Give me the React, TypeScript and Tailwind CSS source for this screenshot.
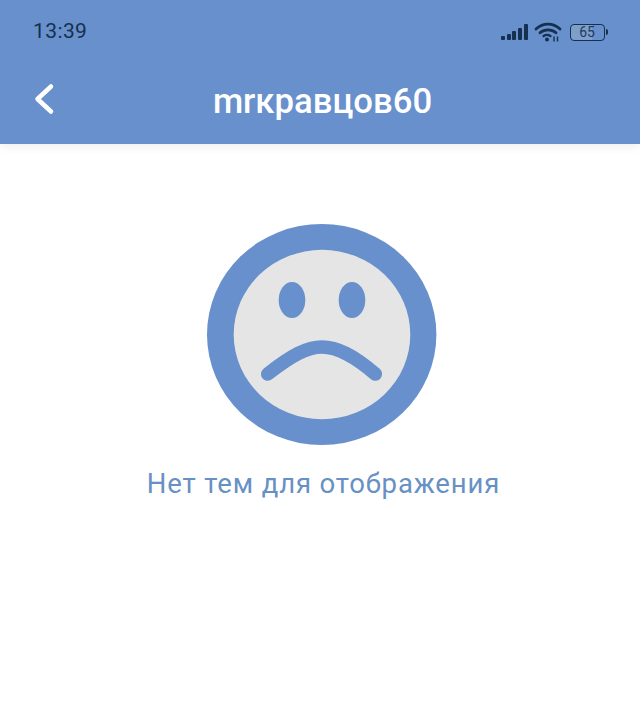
function Signal() {
  const bars = [4, 6, 9, 12, 16];
  return (
    <div className="flex items-end gap-[1.6px]">
      {bars.map((h) => (
        <div key={h} className="w-[4px] rounded-[1px] bg-[#16304f]" style={{ height: h }} />
      ))}
    </div>
  );
}

function Wifi() {
  return (
    <svg width="28" height="20" viewBox="0 0 28 20" fill="none" stroke="#16304f" strokeWidth="2.8" strokeLinecap="round">
      <path d="M2 7C9 0.5 19 0.5 26 7" />
      <path d="M6 10.8C10.5 7 17.5 7 22 10.8" />
      <path d="M9.5 14C11.5 12.6 14.5 12.6 16.5 14" strokeWidth="2.2" />
      <circle cx="13" cy="17.6" r="2" fill="#16304f" stroke="none" />
      <path d="M20 14.5v5M23.5 14.5v5" strokeWidth="1.4" strokeLinecap="butt" />
    </svg>
  );
}

function Battery() {
  return (
    <div className="flex items-center gap-[1.5px]">
      <div className="flex h-[17px] w-[35px] items-center justify-center rounded-[4px] border-[1.5px] border-[#16304f] bg-[linear-gradient(90deg,#7f9fcb_65%,transparent_65%)] text-[14px] leading-none text-[#1f3a5c]">
        65
      </div>
      <div className="h-[6px] w-[2px] rounded-r-sm bg-[#16304f]" />
    </div>
  );
}

function SadFace() {
  return (
    <svg width="230" height="222" viewBox="0 0 230 222">
      <ellipse cx="114.7" cy="110.5" rx="114.7" ry="110.5" fill="#6790cc" />
      <ellipse cx="115" cy="110.5" rx="88.3" ry="84.7" fill="#e5e5e5" />
      <ellipse cx="85" cy="76" rx="13.3" ry="18" fill="#6790cc" />
      <ellipse cx="145" cy="76" rx="13.3" ry="18" fill="#6790cc" />
      <path
        d="M60.7 150C85 131 100 123 115 123C130 123 146 131 168.3 150"
        fill="none"
        stroke="#6790cc"
        strokeWidth="13.5"
        strokeLinecap="round"
      />
    </svg>
  );
}

export default function App() {
  return (
    <div className="flex h-[721px] w-[640px] flex-col overflow-hidden bg-white font-['Roboto',sans-serif]">
      <header className="z-10 flex h-[144px] flex-col bg-[#6790cc] shadow-[0_2px_10px_rgba(0,0,0,0.08)]">
        {/* Status bar */}
        <div className="flex h-[64px] items-center justify-between pl-[33px] pr-[32px]">
          <span className="text-[21px] font-[450] tracking-[0.4px] text-[#16304f]">13:39</span>
          <div className="flex items-center gap-[6px]">
            <Signal />
            <Wifi />
            <div className="ml-[2px]">
              <Battery />
            </div>
          </div>
        </div>

        {/* Title */}
        <div className="relative flex h-[72px] items-center justify-center pl-[5px] pt-[2px]">
          <button className="absolute left-[33px] top-[19px]">
            <svg width="24" height="32" viewBox="0 0 24 32" fill="none" stroke="#fff" strokeWidth="4.5" strokeLinecap="round" strokeLinejoin="round">
              <path d="M18 3.5L4.5 16L18 28.5" />
            </svg>
          </button>
          <h1 className="text-[34.7px] font-medium leading-none text-white">mrкравцов60</h1>
        </div>
      </header>

      <main className="flex flex-col items-center pl-[3px] pt-[80px]">
        <SadFace />
        <p className="ml-[4px] mt-[19px] text-[27.5px] leading-[38px] tracking-[0.85px] text-[#6790c4]">
          Нет тем для отображения
        </p>
      </main>
    </div>
  );
}
